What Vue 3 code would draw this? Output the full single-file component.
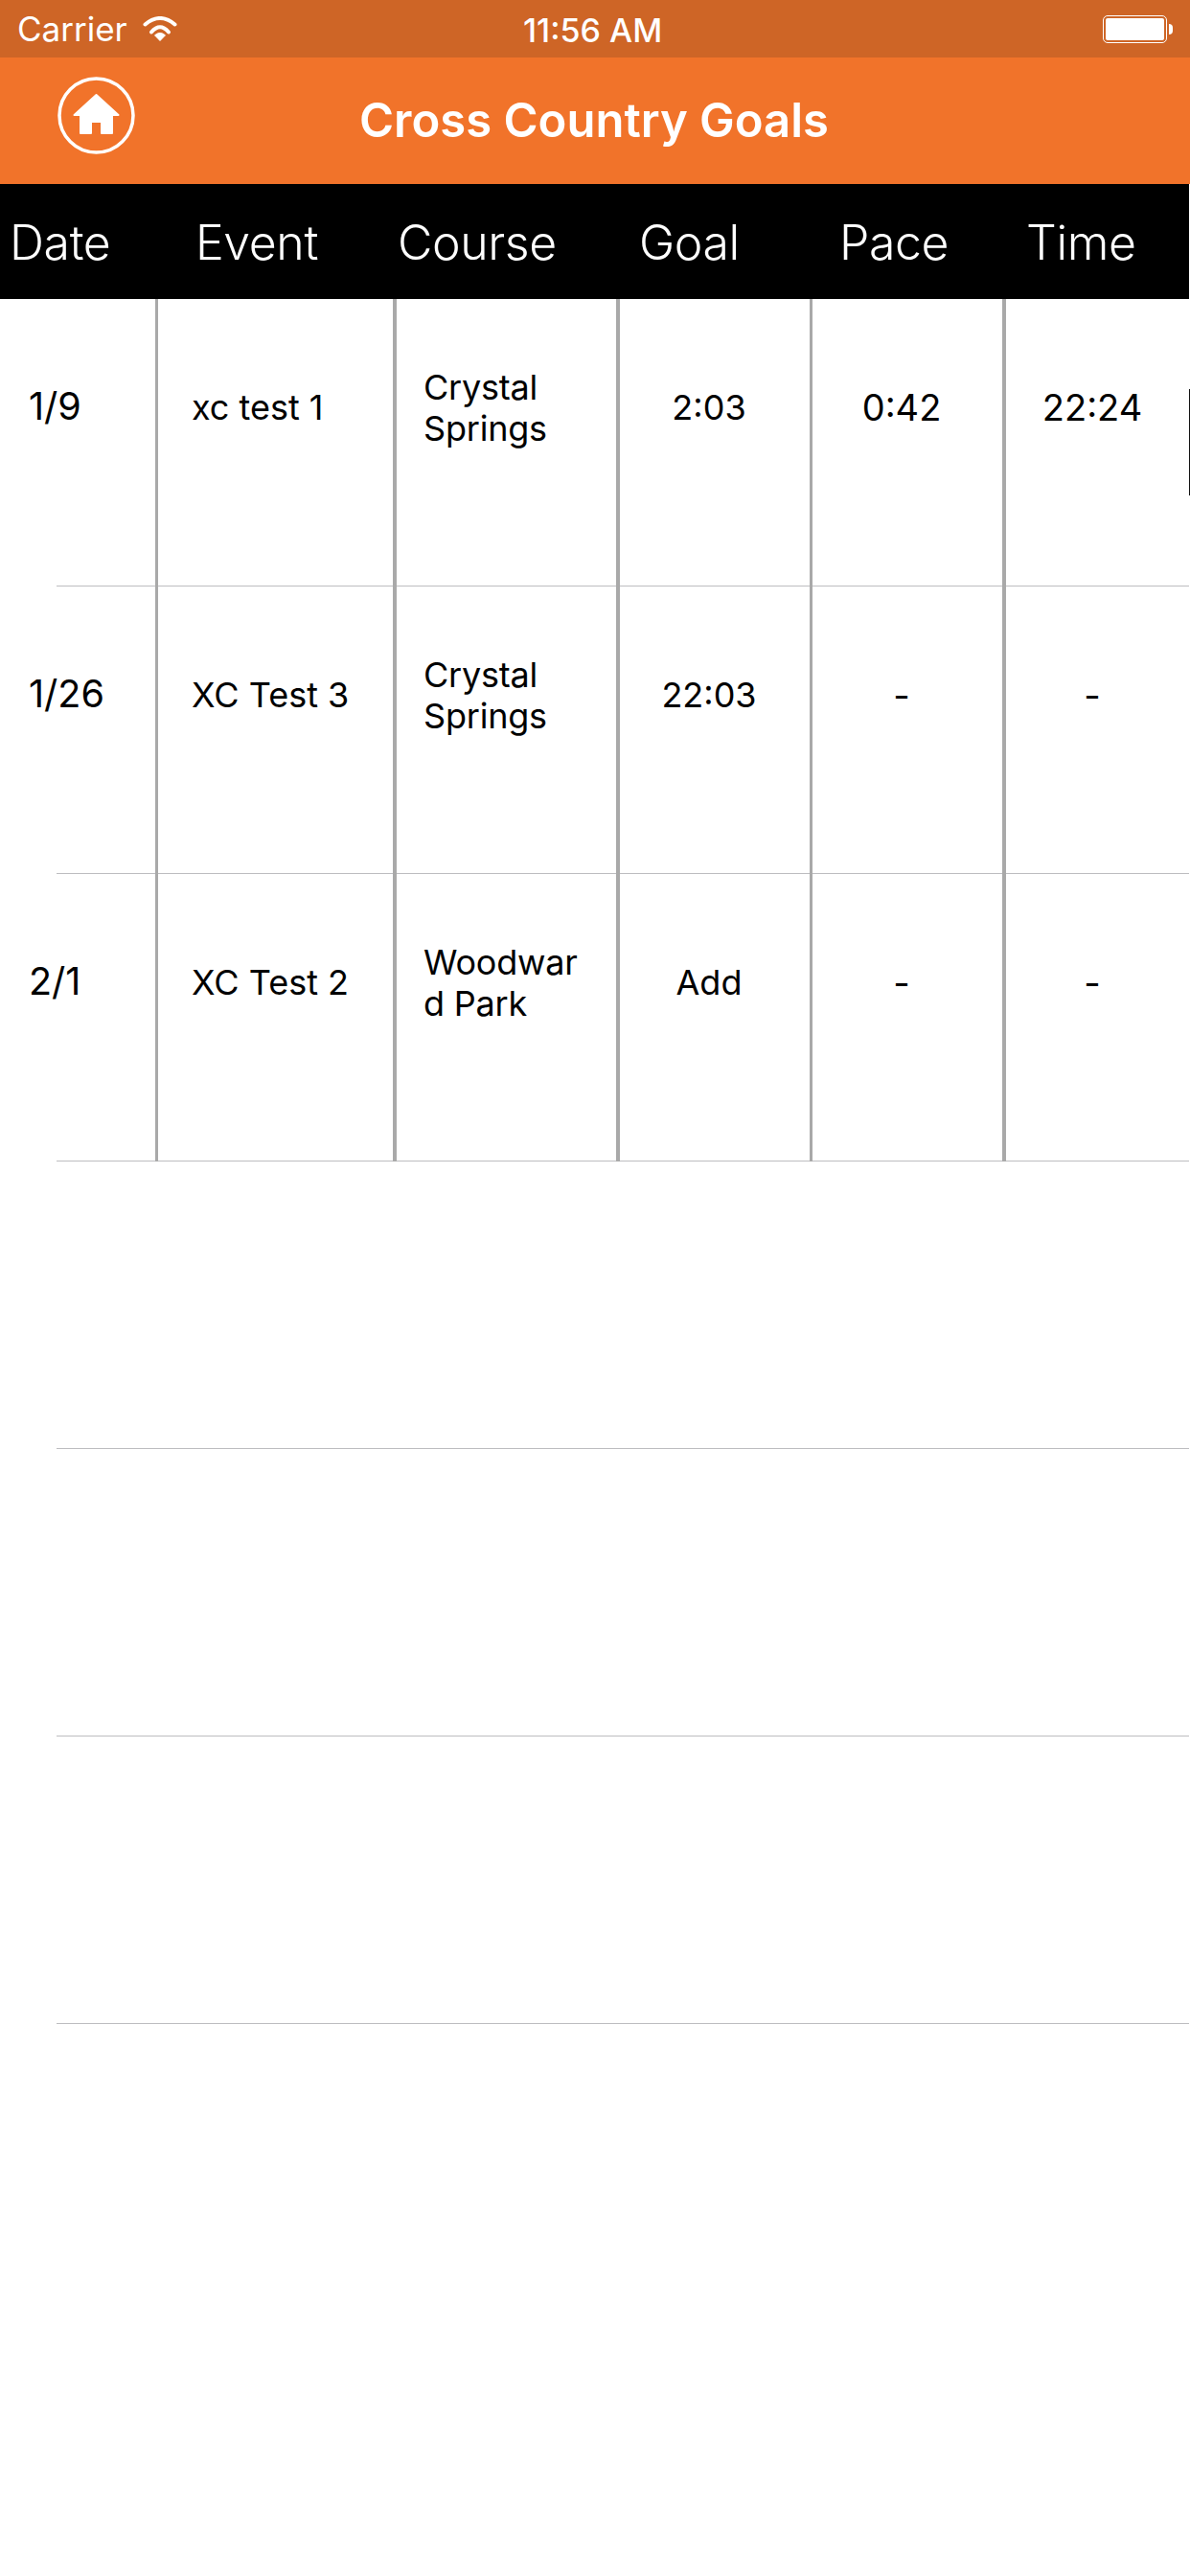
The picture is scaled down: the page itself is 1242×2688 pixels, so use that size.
<script setup>
const rows = [
  { date: '1/9', event: 'xc test 1', course: 'Crystal Springs', goal: '2:03', pace: '0:42', time: '22:24' },
  { date: '1/26', event: 'XC Test 3', course: 'Crystal Springs', goal: '22:03', pace: '-', time: '-' },
  { date: '2/1', event: 'XC Test 2', course: 'Woodward Park', goal: 'Add', pace: '-', time: '-' },
]
const emptyRows = [1, 2, 3]
const headers = ['Date', 'Event', 'Course', 'Goal', 'Pace', 'Time']
</script>

<template>
  <div class="screen">
    <div class="status">
      <div class="status-left">
        <span class="carrier">Carrier</span>
        <svg class="wifi" width="36" height="27" viewBox="0 0 36 27">
          <path d="M2.5 8.5 Q18 -4.5 33.5 8.5" fill="none" stroke="#fff" stroke-width="4" stroke-linecap="round" />
          <path d="M9 16.5 Q18 6 27 16.5" fill="none" stroke="#fff" stroke-width="4" stroke-linecap="round" />
          <path d="M18 25.5 L12.5 19.8 Q18 15 23.5 19.8 Z" fill="#fff" stroke="#fff" stroke-width="1" stroke-linejoin="round" />
        </svg>
      </div>
      <span class="clock">11:56 AM</span>
      <div class="battery">
        <div class="battery-body"><div class="battery-fill"></div></div>
        <div class="battery-nub"></div>
      </div>
    </div>

    <div class="nav">
      <div class="home">
        <svg width="81" height="81" viewBox="0 0 81 81">
          <circle cx="40.5" cy="40.5" r="38.5" fill="none" stroke="#fff" stroke-width="3.5" />
          <path d="M40.5 19 L17.5 40 H24 V59 H35 V47 H46 V59 H57 V40 H63.5 Z" fill="#fff" stroke="#fff" stroke-width="2" stroke-linejoin="round" />
        </svg>
      </div>
      <span class="title">Cross Country Goals</span>
    </div>

    <div class="head">
      <span v-for="(h, i) in headers" :key="h" class="head-cell" :class="'hc' + i">{{ h }}</span>
    </div>

    <div class="body">
      <div class="scrollbar"></div>
      <div v-for="r in rows" :key="r.date" class="row">
        <div class="cell c-date">{{ r.date }}</div>
        <div class="cell c-event">{{ r.event }}</div>
        <div class="cell c-course"><span class="course-text">{{ r.course }}</span></div>
        <div class="cell c-goal">{{ r.goal }}</div>
        <div class="cell c-pace">{{ r.pace }}</div>
        <div class="cell c-time">{{ r.time }}</div>
      </div>
      <div v-for="n in emptyRows" :key="n" class="row"></div>
    </div>
  </div>
</template>

<style scoped>
.screen {
  width: 1242px;
  height: 2688px;
  background: #fff;
  font-family: Inter, "Liberation Sans", sans-serif;
  overflow: hidden;
  position: relative;
}
.status {
  height: 60px;
  background: #ce6526;
  color: #fff;
  display: flex;
  align-items: center;
  justify-content: space-between;
  padding: 0 18px;
  box-sizing: border-box;
  position: relative;
}
.status-left {
  display: flex;
  align-items: center;
  gap: 16px;
}
.carrier {
  font-size: 35px;
  font-weight: 400;
}
.wifi {
  display: block;
}
.clock {
  font-size: 34px;
  font-weight: 500;
  position: absolute;
  left: 546px;
  top: 12px;
  line-height: 40px;
}
.battery {
  display: flex;
  align-items: center;
}
.battery-body {
  width: 67px;
  height: 29px;
  box-sizing: border-box;
  border: 1px solid #fff;
  border-radius: 5px;
  padding: 2px;
}
.battery-fill {
  height: 100%;
  background: #fff;
  border-radius: 2px;
}
.battery-nub {
  width: 4px;
  height: 11px;
  background: #fff;
  border-radius: 0 6px 6px 0;
  margin-left: 2px;
}
.nav {
  height: 132px;
  background: #f1732a;
  display: flex;
  align-items: center;
  justify-content: center;
  position: relative;
}
.home {
  position: absolute;
  left: 60px;
  top: 20px;
  width: 81px;
  height: 81px;
}
.home svg {
  display: block;
}
.title {
  color: #fff;
  font-size: 49px;
  font-weight: 600;
  margin-left: -2px;
  margin-top: -2px;
}
.head {
  height: 120px;
  width: 1241px;
  background: #000;
  color: #fff;
  display: flex;
  align-items: center;
  font-size: 50px;
  font-weight: 300;
  letter-spacing: -0.4px;
}
.head-cell {
  display: block;
  flex: none;
  box-sizing: border-box;
  margin-top: 2px;
}
.hc0 { width: 204px; padding-left: 10px; }
.hc1 { width: 211px; }
.hc2 { width: 252px; }
.hc3 { width: 209px; }
.hc4 { width: 195px; }
.hc5 { width: 170px; }
.body {
  position: relative;
}
.scrollbar {
  position: absolute;
  left: 1241px;
  top: 94px;
  width: 1px;
  height: 111px;
  background: #111;
}
.row {
  height: 300px;
  display: flex;
  position: relative;
}
.row::after {
  content: "";
  position: absolute;
  left: 59px;
  width: 1182px;
  bottom: 0;
  height: 1px;
  background: #bdbdc0;
}
.cell {
  height: 300px;
  box-sizing: border-box;
  padding-bottom: 74px;
  display: flex;
  align-items: center;
  font-size: 36px;
  color: #000;
  flex: none;
  position: relative;
  z-index: 1;
  border-right: 4px solid #a9a9a9;
}
.c-date {
  width: 165px;
  padding-left: 30px;
  font-size: 39.5px;
  padding-bottom: 76px;
  border-right-width: 3px;
}
.c-event {
  width: 249px;
  padding-left: 35px;
}
.c-course {
  width: 233px;
  padding-left: 28px;
  padding-bottom: 72px;
}
.course-text {
  width: 172px;
  line-height: 43px;
  display: block;
  overflow-wrap: anywhere;
  letter-spacing: -0.2px;
}
.c-goal {
  width: 201px;
  justify-content: center;
  padding-right: 12px;
  border-right-width: 3px;
}
.c-pace {
  width: 202px;
  justify-content: center;
  padding-right: 12px;
  font-size: 38px;
}
.c-time {
  width: 192px;
  justify-content: center;
  padding-right: 12px;
  font-size: 38px;
  border-right: none;
}
</style>
